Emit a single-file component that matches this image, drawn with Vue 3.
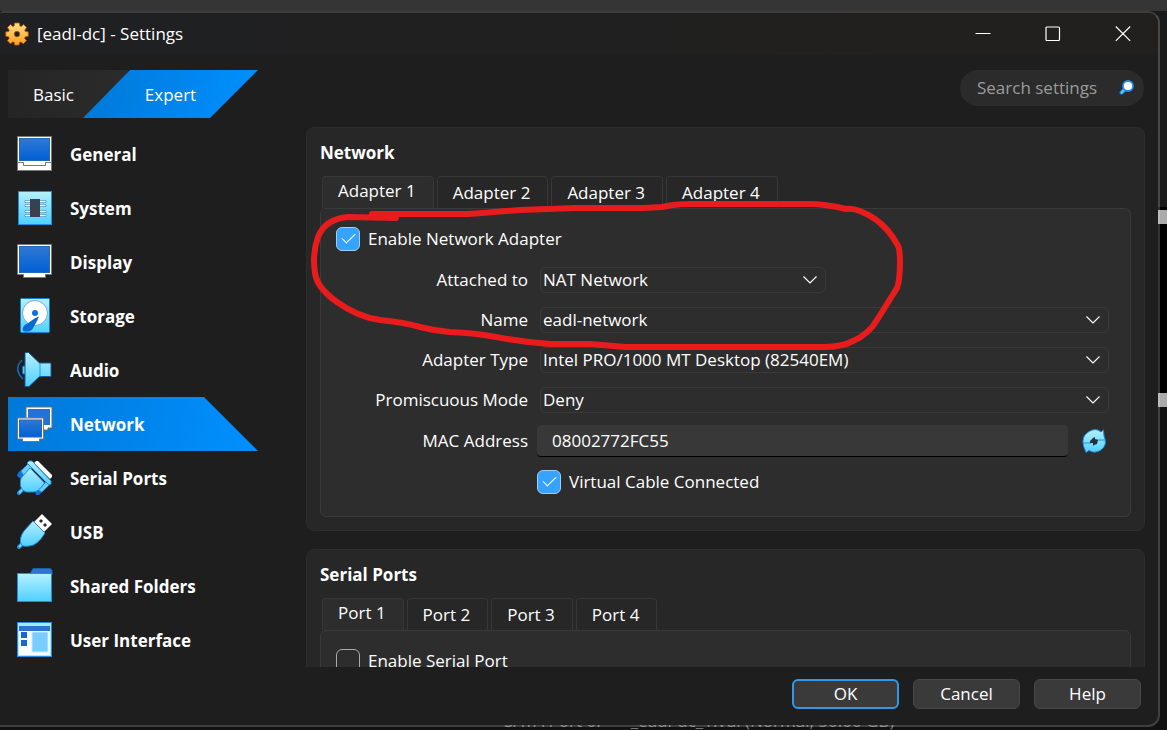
<script setup>
import { ref } from 'vue'

const mode = ref('Expert')
const search = ref('')
const section = ref('Network')
const adapter = ref(1)
const port = ref(1)
const enabled = ref(true)
const cable = ref(true)
const serial = ref(false)
const mac = ref('08002772FC55')
const sections = ['General', 'System', 'Display', 'Storage', 'Audio', 'Network', 'Serial Ports', 'USB', 'Shared Folders', 'User Interface']
const fields = ref([
  { id: 'attached', label: 'Attached to', value: 'NAT Network', options: ['NAT Network', 'NAT', 'Bridged Adapter', 'Internal Network'], short: true },
  { id: 'name', label: 'Name', value: 'eadl-network', options: ['eadl-network'] },
  { id: 'type', label: 'Adapter Type', value: 'Intel PRO/1000 MT Desktop (82540EM)', options: ['Intel PRO/1000 MT Desktop (82540EM)'] },
  { id: 'promiscuous', label: 'Promiscuous Mode', value: 'Deny', options: ['Deny', 'Allow VMs', 'Allow All'] },
])
</script>

<template>
  <div class="desktop">
    <div class="backdrop-top"></div>
    <div class="backdrop-mark first"></div>
    <div class="backdrop-mark second"></div>
    <div class="backdrop-text"><span>SATA Port 0:</span><span>_eadl-dc_1.vdi (Normal, 50.00 GB)</span></div>

    <div class="window">
      <header class="titlebar">
        <svg class="gear" viewBox="0 0 24 24" aria-hidden="true">
          <defs>
            <linearGradient id="gold" x1="0" y1="0" x2="0" y2="1"><stop offset="0" stop-color="#ffe08a" /><stop offset="1" stop-color="#ff9d1e" /></linearGradient>
            <linearGradient id="aqua" x1="0" y1="0" x2="0" y2="1"><stop offset="0" stop-color="#b4f0ff" /><stop offset="1" stop-color="#50d0ff" /></linearGradient>
            <linearGradient id="screen" x1="0" y1="0" x2="0" y2="1"><stop offset="0" stop-color="#3078d4" /><stop offset="1" stop-color="#0060d4" /></linearGradient>
          </defs>
          <path d="M9.6 1h4.8l.4 3 1.3.5 2.5-1.9 3 3-1.9 2.5.5 1.4 3 .4v4.4l-3 .5-.6 1.5 1.8 2.4-3.1 3-2.4-1.800-1.500.6-.4 2.600H9.800l-.4-2.700-1.500-.6-2.500 1.900-3-3 1.900-2.400-.6-1.500-2.900-.5V9.900l3-.4.5-1.400-1.800-2.500 3-3 2.400 1.900 1.300-.5zM12 9.300a2.800 2.800 0 1 0 0 5.600 2.800 2.800 0 0 0 0-5.600z" fill="url(#gold)" fill-rule="evenodd" stroke="#c75a00" stroke-width=".8" />
        </svg>
        <h1>[eadl-dc] - Settings</h1>
        <div class="captions">
          <button aria-label="Minimize"><svg viewBox="0 0 16 16"><path d="M.5 7.500h15" /></svg></button>
          <button aria-label="Maximize"><svg viewBox="0 0 16 16"><rect x="1" y="1" width="13.500" height="13.500" rx="1" /></svg></button>
          <button aria-label="Close"><svg viewBox="0 0 16 16"><path d="M.8.5l14.400 14.400M15.200.5L.8 14.900" /></svg></button>
        </div>
      </header>

      <div class="toolbar">
        <div class="modes">
          <button class="basic" :aria-pressed="mode === 'Basic'" @click="mode = 'Basic'">Basic</button>
          <button class="expert" :aria-pressed="mode === 'Expert'" @click="mode = 'Expert'">Expert</button>
        </div>
        <label class="search">
          <input v-model="search" type="search" aria-label="Search settings" placeholder="Search settings" />
          <svg viewBox="0 0 16 16" aria-hidden="true">
            <path d="M5.500 9.500L2.600 12.600" stroke="#1766b8" stroke-width="4.400" stroke-linecap="round" />
            <path d="M5.500 9.500L2.600 12.600" stroke="#55c7f5" stroke-width="2.600" stroke-linecap="round" />
            <circle cx="9" cy="6" r="5" fill="#fff" stroke="#2a8cf0" stroke-width="1.800" />
          </svg>
        </label>
      </div>

      <div class="body">
        <nav>
          <button v-for="s in sections" :key="s" :class="{ active: section === s }" @click="section = s">
            <svg class="icon" viewBox="0 0 36 36" aria-hidden="true">
              <template v-if="s === 'General'">
                <rect x=".5" y=".5" width="34" height="34" fill="#fff" stroke="#777" />
                <rect x="2.500" y="2.500" width="30" height="22" fill="url(#screen)" stroke="#2468b8" />
                <path d="M1 26.500h5.500v3h22v-3H34" fill="none" stroke="#777" />
              </template>
              <template v-else-if="s === 'System'">
                <rect x="1.500" y="1.500" width="33" height="33" fill="url(#aqua)" stroke="#238be0" />
                <path d="M9 11.500h5M9 15.500h5M9 21.500h5M9 25.500h5M23 11.500h5M23 15.500h5M23 21.500h5M23 25.500h5" stroke="#4293c4" stroke-width="3" stroke-linecap="round" />
                <path d="M9 11.500h5M9 15.500h5M9 21.500h5M9 25.500h5M23 11.500h5M23 15.500h5M23 21.500h5M23 25.500h5" stroke="#fff" stroke-width="1.600" stroke-linecap="round" />
                <rect x="13" y="9" width="10" height="18" fill="#3b414c" />
              </template>
              <template v-else-if="s === 'Display'">
                <path d="M.5.5h34v30h-6v3h-22v-3h-6z" fill="#fff" stroke="#777" />
                <rect x="2.500" y="2.500" width="30" height="26" fill="url(#screen)" stroke="#2468b8" />
              </template>
              <template v-else-if="s === 'Storage'">
                <rect x="3.500" y=".5" width="29" height="34" rx="1" fill="url(#aqua)" stroke="#147ed0" />
                <circle cx="18" cy="15" r="12.500" fill="#fff" stroke="#6caeda" />
                <circle cx="18" cy="15" r="3" fill="#0873dc" />
                <path d="M22 18.500l-1.500 3.500-5 9q-2 3-8 2.500-3-.5-1-5 1-2 4-3l7-5z" fill="#0869d2" />
              </template>
              <template v-else-if="s === 'Audio'">
                <path d="M5 8Q-4 17 6 27" fill="none" stroke="#1766b8" stroke-width="1.600" />
                <rect x="5.500" y="14" width="5" height="8" rx="1" fill="#55c7f5" stroke="#1766b8" />
                <path d="M8.500.5h3L22.500 11h11q.5 0 .5 1v12.500H22.500L12 34.500H8.500q-.5 0-.5-1v-32z" fill="url(#aqua)" stroke="#155b9c" />
                <path d="M23 11v13.500" stroke="#2596db" />
              </template>
              <template v-else-if="s === 'Network'">
                <path d="M9 1h26v21h-4v2h-8v-2H9z" fill="#fff" stroke="#6c6c6c" />
                <rect x="11" y="3" width="22" height="16" fill="#2771d5" />
                <path d="M.5 12h26v21h-4v2.500h-17V33h-5z" fill="#fff" stroke="#777" />
                <rect x="2.500" y="14" width="22" height="17" fill="url(#screen)" stroke="#2468b8" />
              </template>
              <template v-else-if="s === 'Serial Ports'">
                <path d="M1 13l4-4 4 4-5 6-4-3zM18 31l7-7 4 4-7 7h-3z" fill="#176fd9" />
                <path d="M4 11l7-7 4 4-8 8zM21 30l8-8 3 3-7 7z" fill="#68cff5" stroke="#238be0" />
                <path d="M17 3l2-2h2l14 14v2l-2 2z" fill="#fff" />
                <path d="M2 33l7-7" stroke="#238be0" stroke-width="4" stroke-linecap="round" /><path d="M2 33l7-7" stroke="#72d7f5" stroke-width="2" />
                <path d="M13 8L5 17q-2 2-1.500 9 1 5 6 6h7q5 0 11-9z" fill="url(#aqua)" stroke="#238be0" />
                <path d="M10 3l2-2h3l19 20v3l-2 1z" fill="url(#aqua)" stroke="#238be0" />
              </template>
              <template v-else-if="s === 'USB'">
                <path d="M17 8l8-8 10 10-8 8z" fill="#fff" stroke="#888" />
                <path d="M22 7l2-2 2 2-2 2zM26 11l2-2 2 2-2 2z" fill="#292929" />
                <path d="M2 33l7-7" stroke="#238be0" stroke-width="4" stroke-linecap="round" /><path d="M2 33l7-7" stroke="#72d7f5" stroke-width="2" />
                <path d="M16 7l12 12Q20 32 12 32q-7 1-8-2-2-6 3-13z" fill="url(#aqua)" stroke="#238be0" />
              </template>
              <template v-else-if="s === 'Shared Folders'">
                <path d="M13 6l3-5.500h17L35 2v5z" fill="#2d75d4" stroke="#1763aa" />
                <rect x=".5" y="5.500" width="34" height="28" fill="url(#aqua)" stroke="#238be0" />
              </template>
              <template v-else>
                <rect x=".5" y=".5" width="34" height="34" fill="#a2eaff" stroke="#238be0" />
                <rect x="2" y="4" width="31" height="5" fill="#2d75d4" />
                <rect x="2" y="9" width="31" height="24" fill="#fff" />
                <path d="M4 10h6v6H4zM4 18h6v6H4z" fill="#1769ce" />
                <rect x="15" y="10" width="16" height="20" fill="#78cdfc" stroke="#c5eeff" />
              </template>
            </svg>
            <span>{{ s }}</span>
          </button>
        </nav>

        <main>
          <section class="panel">
            <h2>Network</h2>
            <div class="tabs" role="tablist">
              <button v-for="n in 4" :key="n" role="tab" :aria-selected="adapter === n" @click="adapter = n">Adapter {{ n }}</button>
            </div>
            <div class="pane">
              <label class="check"><input v-model="enabled" type="checkbox" />Enable Network Adapter</label>
              <div class="form">
                <template v-for="f in fields" :key="f.id">
                  <label :for="f.id">{{ f.label }}</label>
                  <div class="combo" :class="{ short: f.short }">
                    <select :id="f.id" v-model="f.value"><option v-for="o in f.options" :key="o">{{ o }}</option></select>
                    <svg viewBox="0 0 14 8" aria-hidden="true"><path d="M.5.5L7 7 13.500.5" /></svg>
                  </div>
                </template>
                <label for="mac">MAC Address</label>
                <div class="mac">
                  <input id="mac" v-model="mac" type="text" />
                  <button aria-label="Refresh MAC address">
                    <svg viewBox="0 0 24 24">
                      <path d="M4 23.500L1.500 17Q-1 7 7 2.500q7-4 12 .5l2.500-2 .5 6q4 9-3 14-6 4-12 .5z" fill="url(#aqua)" stroke="#1885dd" />
                      <path d="M1 14h8M14 11h9" stroke="#2791dc" />
                      <path d="M8 12l3-3 2-1v2l3 1-1 4-3 1-1 1v-3H8z" fill="#25323d" />
                    </svg>
                  </button>
                </div>
                <label class="check cable"><input v-model="cable" type="checkbox" />Virtual Cable Connected</label>
              </div>
            </div>
          </section>

          <section class="panel">
            <h2>Serial Ports</h2>
            <div class="tabs" role="tablist">
              <button v-for="n in 4" :key="n" role="tab" :aria-selected="port === n" @click="port = n">Port {{ n }}</button>
            </div>
            <div class="pane">
              <label class="check"><input v-model="serial" type="checkbox" />Enable Serial Port</label>
            </div>
          </section>
        </main>
      </div>

      <footer>
        <button class="primary">OK</button>
        <button>Cancel</button>
        <button>Help</button>
      </footer>
    </div>

    <svg class="annotation" viewBox="0 0 600 160" aria-hidden="true">
      <path d="M96 18L48 17Q25 19 18 37Q12 54 15 73Q17 88 37 102Q58 117 80 120Q102 122 120 127Q135 131 150 132Q176 133 196 137Q222 142 250 144L290 144L325 147H524Q542 147 553 141Q569 134 577 120L597 88Q600 80 600 61Q600 48 597 44Q588 28 575 19Q557 7 546 9Q526 4 508 4H390Q375 4 362 7L344 8H275L220 10Q184 13 168 14H72" />
    </svg>
  </div>
</template>

<style>
html, body { margin: 0; background: #000; }
</style>

<style scoped>
* { box-sizing: border-box; }
.desktop { position: relative; display: flex; height: 100vh; padding: 11px 7px 3px 0; overflow: hidden; background: linear-gradient(#1b1b1b 0 207px, #000 207px 407px, #111 407px); color: #fff; font: 17px/24px "Open Sans", "Noto Sans", sans-serif; }
button, input, select { font: inherit; color: inherit; }
button { border: 0; padding: 0; background: none; }
.backdrop-top { position: absolute; inset: 0 0 auto; height: 11px; background: #353535; }
.backdrop-mark { position: absolute; right: 0; width: 9px; height: 14px; background: #aaa; }
.first { top: 210px; }
.second { top: 393px; }
.backdrop-text { position: absolute; left: 504px; bottom: -3px; display: flex; gap: 30px; color: #777; line-height: 24px; white-space: pre; }
.window { position: relative; flex: 1; min-width: 0; display: flex; flex-direction: column; background: #1e1e1e; background-clip: padding-box; border: 2px solid rgba(255, 255, 255, 0.2); border-top-color: #3d3d3d; border-left: 0; border-radius: 4px 12px 12px 0; overflow: hidden; }
.titlebar { display: flex; align-items: center; height: 42px; flex: none; padding-left: 5px; background: linear-gradient(90deg, #1f2022, #22201e); }
.gear { width: 24px; height: 24px; }
h1 { flex: 1; margin: 0 0 0 8px; font-size: 17px; font-weight: 400; line-height: 24px; }
.captions { display: flex; }
.captions button { width: 70px; height: 42px; display: grid; place-items: center; }
.captions svg { width: 16px; height: 16px; fill: none; stroke: #fff; stroke-width: 1.2; }
.toolbar { display: flex; justify-content: space-between; align-items: flex-start; flex: none; padding: 15px 14px 9px 8px; }
.modes { display: grid; grid-template-columns: 75px 175px; height: 48px; background: linear-gradient(90deg, #252525, #2b2b2b 120px, transparent 120px); }
.modes button { padding-top: 2px; }
.modes .basic { padding-left: 16px; }
.expert { background: linear-gradient(100deg, #0078d7, #0090ff); clip-path: polygon(47px 0, 100% 0, 127px 100%, 0 100%); }
.search { display: flex; align-items: center; width: 184px; height: 36px; padding: 0 9px 0 17px; border-radius: 18px; background: #2b2b2b; }
.search input { flex: 1; min-width: 0; padding: 0; border: 0; outline: 0; background: none; }
.search input::placeholder { color: #9b9b9b; opacity: 1; }
.search svg { width: 16px; height: 16px; flex: none; }
.body { flex: 1; min-height: 0; display: grid; grid-template-columns: 250px minmax(0, 1fr); gap: 48px; padding: 0 13px 0 8px; }
nav { display: flex; flex-direction: column; }
nav button { display: flex; align-items: center; gap: 17px; height: 54px; padding-left: 9px; font-weight: 700; text-align: left; flex: none; }
nav span { padding-top: 2px; }
nav .active { background: linear-gradient(100deg, #0078d7, #0090ff); clip-path: polygon(0 0, 196px 0, 100% 100%, 0 100%); }
.icon { width: 36px; height: 36px; flex: none; }
main { display: flex; flex-direction: column; gap: 18px; overflow: hidden; }
.panel { flex: none; padding: 13px; background: #272727; border: 1px solid #2d2d2d; border-radius: 8px; }
h2 { margin: 0 0 11px; font-size: 17px; line-height: 24px; font-weight: 700; }
.tabs { display: flex; gap: 3px; padding-left: 2px; }
.tabs button { height: 32px; padding: 1px 17px 0 15px; border: 1px solid #373737; border-bottom: 0; border-radius: 4px 4px 0 0; background: #272727; }
.tabs button[aria-selected="true"] { padding: 0 17px 3px 15px; background: #2d2d2d; }
.pane { padding: 14px 21px 18px 15px; border: 1px solid #3a3a3a; border-radius: 6px; background: #2d2d2d; }
.check { display: flex; align-items: center; gap: 8px; width: max-content; height: 32px; }
.check input { appearance: none; width: 24px; height: 24px; margin: 0; border: 1px solid #aaa; border-radius: 6px; position: relative; }
.check input:checked { background: #35a3ff; border-color: #a3cff4; }
.check input:checked::after { content: ""; position: absolute; left: 5px; top: 5px; width: 12px; height: 6px; border-left: 1px solid #fff; border-bottom: 1px solid #fff; transform: rotate(-45deg); }
.form { display: grid; grid-template-columns: 192px minmax(0, 1fr); column-gap: 9px; grid-template-rows: repeat(4, 32px) 34px 32px; row-gap: 8px; margin-top: 9px; align-items: center; }
.form > label:not(.cable) { text-align: right; }
.combo { position: relative; margin-left: 3px; height: 26px; }
.short { width: 286px; }
.combo select { appearance: none; display: block; width: 100%; height: 26px; padding: 0 36px 0 2px; border: 1px solid #3a3a3a; border-radius: 6px; background: #2d2d2d; line-height: 24px; }
.combo svg { position: absolute; right: 9px; top: 9px; width: 14px; height: 8px; fill: none; stroke: #fff; stroke-width: 1.2; pointer-events: none; }
.mac { display: flex; align-items: center; gap: 14px; }
.mac input { flex: 1; min-width: 0; height: 32px; padding: 0 15px; border: 0; border-bottom: 1px solid #000; border-radius: 4px; background: #383838; }
.mac button { width: 24px; height: 24px; margin-right: 3px; }
.mac svg { display: block; width: 24px; height: 24px; }
.cable { grid-column: 2; }
footer { display: flex; justify-content: flex-end; gap: 14px; flex: none; padding: 12px 17px 16px; }
footer button { width: 107px; height: 30px; border: 1px solid #484848; border-radius: 6px; background: #3a3a3a; }
footer .primary { border: 2px solid #3299e8; }
.annotation { position: absolute; left: 300px; top: 200px; width: 600px; height: 160px; overflow: visible; fill: none; stroke: #e81c1c; stroke-width: 6; stroke-linecap: round; stroke-linejoin: round; pointer-events: none; }
</style>
